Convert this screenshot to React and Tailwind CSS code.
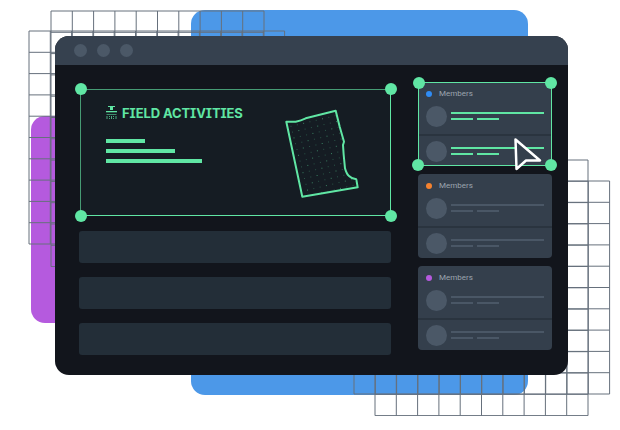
const range = (n) => Array.from({ length: n }, (_, i) => i);

// thin wireframe grid that sits behind the window
function GridLines({ cols, rows, className }) {
  const cell = 21.3;
  const w = cols * cell;
  const h = rows * cell;
  return (
    <svg className={className} width={w + 2} height={h + 2} fill="none" stroke="#66707c" strokeWidth="1">
      {range(cols + 1).map((i) => (
        <line key={i} x1={1 + i * cell} y1="1" x2={1 + i * cell} y2={h + 1} />
      ))}
      {range(rows + 1).map((i) => (
        <line key={i} x1="1" y1={1 + i * cell} x2={w + 1} y2={1 + i * cell} />
      ))}
    </svg>
  );
}

function Handle({ className }) {
  return <span className={`absolute w-[12px] h-[12px] rounded-full bg-[#60e6a4] ${className}`} />;
}

function FieldMap() {
  const outline =
    "M17.3 21.7 L26.7 21.7 Q32 20.5 36.7 18.3 L66.7 10.7 L70.7 26.7 L75 41.7 L74 45 L74.7 55 L76 68.3 Q77.5 74 80 76 Q83 79 87.3 79.3 L88.7 87.3 L33.3 96.7 Z";
  const dots = [];
  range(15).forEach((r) => {
    range(12).forEach((c) => {
      const x = 20 + c * 6.3 + r * 1.5;
      const y = 20 + r * 5.8 - c * 1.5;
      dots.push(<rect key={`${r}-${c}`} x={x} y={y} width="1" height="1" fill="#60e6a4" opacity={(r + c) % 3 === 0 ? 0.5 : 0.28} />);
    });
  });
  return (
    <svg width="100" height="105" viewBox="0 0 100 105" fill="none">
      <clipPath id="field-clip">
        <path d={outline} />
      </clipPath>
      <g clipPath="url(#field-clip)">{dots}</g>
      <path d={outline} stroke="#60e6a4" strokeWidth="2" strokeLinejoin="round" />
    </svg>
  );
}

function FieldIcon() {
  return (
    <svg width="11" height="14" viewBox="0 0 11 14" fill="#60e6a4">
      <rect x="2" y="0" width="7" height="1" />
      <rect x="4" y="1" width="3" height="3" />
      <rect x="0" y="5" width="11" height="1.3" />
      <g opacity="0.7">
        <rect x="0.5" y="8" width="10" height="0.8" />
        <rect x="0.5" y="10" width="1" height="3" />
        <rect x="3" y="10" width="1" height="1" />
        <rect x="3" y="12" width="1" height="1" />
        <rect x="5" y="10" width="1" height="3" />
        <rect x="7" y="10" width="1" height="1" />
        <rect x="7" y="12" width="1" height="1" />
        <rect x="9.5" y="10" width="1" height="3" />
      </g>
    </svg>
  );
}

function MemberRow({ active, className }) {
  const line = active ? "bg-[#60e6a4]" : "bg-[#4a5766]";
  return (
    <div className={`flex items-center gap-[4px] pl-[8px] pr-[8px] ${className}`}>
      <span className="w-[21px] h-[21px] rounded-full bg-[#4b5867] shrink-0" />
      <div className="flex-1 flex flex-col gap-[4px]">
        <div className={`h-[2px] ${line}`} />
        <div className="flex gap-[4px]">
          <div className={`h-[2px] w-[22px] ${line}`} />
          <div className={`h-[2px] w-[22px] ${line}`} />
        </div>
      </div>
    </div>
  );
}

function MemberCard({ dot, active }) {
  return (
    <div className={`relative h-[84px] bg-[#343f4c] flex flex-col ${active ? "" : "rounded-[4px]"}`}>
      <div className="h-[52px] shrink-0">
        <div className="h-[23px] flex items-center gap-[7px] pl-[8px]">
          <span className={`w-[6px] h-[6px] rounded-full ${dot}`} />
          <span className="text-[8px] text-[#9ca5af] font-['Roboto',sans-serif]">Members</span>
        </div>
        <MemberRow active={active} className="mt-[0.5px]" />
      </div>
      <div className="h-[2px] bg-[#2a343f] shrink-0" />
      <MemberRow active={active} className="flex-1" />
      {active && (
        <>
          <div className="absolute inset-0 border border-[#60e6a4]" />
          <Handle className="-left-[5px] -top-[5px]" />
          <Handle className="-right-[5px] -top-[5px]" />
          <Handle className="-left-[6px] -bottom-[5px]" />
          <Handle className="-right-[5px] -bottom-[5px]" />
          <svg className="absolute left-[94px] top-[54px]" width="34" height="36" viewBox="0 0 34 36" fill="#343f4c" stroke="#ffffff" strokeWidth="2.5" strokeLinejoin="round">
            <polygon points="3.5,3.5 28,24.5 14,24.5 4.5,33" />
          </svg>
        </>
      )}
    </div>
  );
}

export default function App() {
  return (
    <div className="relative w-[620px] h-[430px] bg-white overflow-hidden pt-[36px] pl-[55px]">
      <div className="absolute left-[191px] top-[10px] w-[337px] h-[385px] rounded-[14px] bg-[#4c98e8]" />
      <div className="absolute left-[31px] top-[116px] w-[100px] h-[207px] rounded-[14px] bg-[#b55ade]" />
      <GridLines cols={10} rows={12} className="absolute left-[49.7px] top-[9.5px]" />
      <GridLines cols={12} rows={10} className="absolute left-[28.3px] top-[30.3px]" />
      <GridLines cols={12} rows={10} className="absolute left-[353.1px] top-[180.3px]" />
      <GridLines cols={10} rows={12} className="absolute left-[374.3px] top-[158.7px]" />

      <div className="relative w-[513px] h-[339px] rounded-[14px] overflow-hidden bg-[#12151c] flex flex-col">
        <div className="h-[29px] bg-[#36414f] flex items-center gap-[10px] pl-[18.5px] pb-[1px] shrink-0">
          <span className="w-[13px] h-[13px] rounded-full bg-[#4b5867]" />
          <span className="w-[13px] h-[13px] rounded-full bg-[#4b5867]" />
          <span className="w-[13px] h-[13px] rounded-full bg-[#4b5867]" />
        </div>

        <div className="flex-1 flex justify-between pl-[24px] pr-[16px] pt-[17px]">
          <div className="w-[312px] pt-[7px] flex flex-col">
            <div className="relative h-[127px] ml-[1px] bg-[#151c23] border border-[#60e6a4] border-t-[#469b74] border-l-[#469b74] flex justify-between pl-[25px] pt-[15px] mb-[15px]">
              <div>
                <div className="flex items-center gap-[5px] h-[16px]">
                  <FieldIcon />
                  <span className="text-[13px] leading-none font-bold tracking-[-0.1px] text-[#60e6a4] font-['Inter',sans-serif] [font-feature-settings:'ss02']">
                    FIELD ACTIVITIES
                  </span>
                </div>
                <div className="flex flex-col gap-[6px] mt-[18px]">
                  <div className="h-[4px] w-[39px] bg-[#60e6a4]" />
                  <div className="h-[4px] w-[69px] bg-[#60e6a4]" />
                  <div className="h-[4px] w-[96px] bg-[#60e6a4]" />
                </div>
              </div>
              <div className="mr-[21px] -mt-[5px]">
                <FieldMap />
              </div>
              <Handle className="-left-[6.5px] -top-[7px]" />
              <Handle className="-right-[6.5px] -top-[7px]" />
              <Handle className="-left-[6.5px] -bottom-[6.5px]" />
              <Handle className="-right-[6.5px] -bottom-[6.5px]" />
            </div>
            <div className="flex flex-col gap-[14px]">
              <div className="h-[32px] rounded-[3px] bg-[#232e38]" />
              <div className="h-[32px] rounded-[3px] bg-[#232e38]" />
              <div className="h-[32px] rounded-[3px] bg-[#232e38]" />
            </div>
          </div>

          <div className="w-[134px] flex flex-col gap-[8px]">
            <MemberCard dot="bg-[#2f8cf5]" active />
            <MemberCard dot="bg-[#f5822f]" />
            <MemberCard dot="bg-[#b55ade]" />
          </div>
        </div>
      </div>
    </div>
  );
}
